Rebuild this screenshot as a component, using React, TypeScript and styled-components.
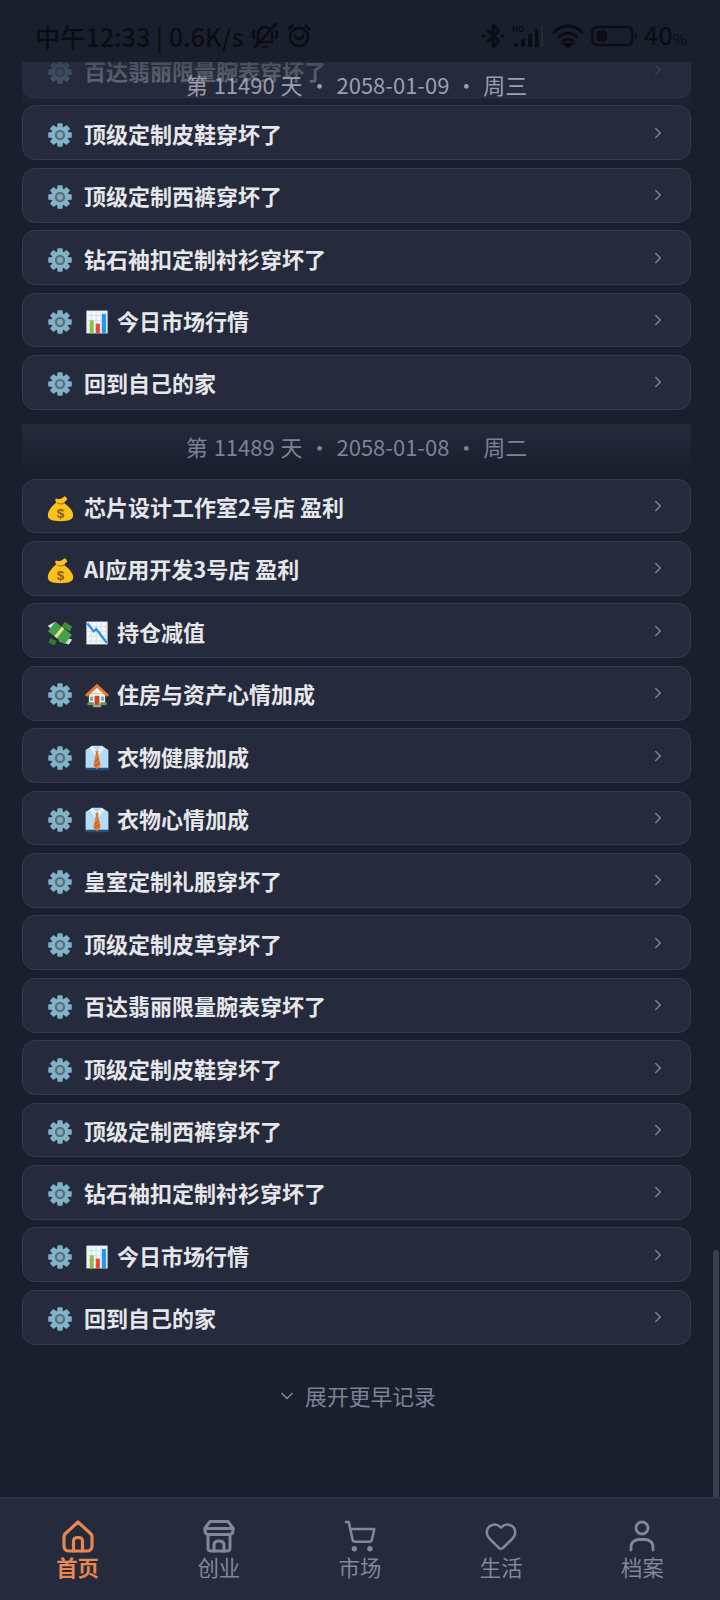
import React from "react";
import styled, { createGlobalStyle } from "styled-components";
import { ChevronRight, ChevronDown, ShoppingCart, Heart } from "lucide-react";

const Global = createGlobalStyle`
  html, body { margin: 0; padding: 0; background: #1a1f2e; }
  * { box-sizing: border-box; }
`;

const CJK = `"Noto Sans CJK SC", "Noto Sans", sans-serif`;

const Page = styled.div`
  width: 720px;
  height: 1600px;
  display: flex;
  flex-direction: column;
  background: #1a1f2e;
  font-family: ${CJK};
  overflow: hidden;
`;

const StatusBar = styled.div`
  height: 62px;
  flex: none;
  display: flex;
  align-items: center;
  justify-content: space-between;
  padding: 10px 33px 0 35px;
  color: #0b0d15;
`;

const StatusGroup = styled.div<{ $gap: number }>`
  display: flex;
  align-items: center;
  gap: ${(p) => p.$gap}px;
`;

const StatusText = styled.span`
  font-size: 25.2px;
  line-height: 30px;
  font-weight: 500;
  white-space: nowrap;
`;

const Percent = styled.span`
  font-size: 15px;
  font-weight: 700;
  color: #0e1019;
`;

const Scroller = styled.main`
  position: relative;
  flex: 1;
  min-height: 0;
  overflow: hidden;
`;

const Content = styled.div`
  margin-top: -19px;
  padding: 0 29px 0 22px;
  display: flex;
  flex-direction: column;
`;

const DayHeader = styled.div`
  height: 47px;
  margin: 14.6px 0 7.3px;
  display: flex;
  align-items: center;
  justify-content: center;
  color: #7d8296;
  font-size: 22px;
  padding-bottom: 3px;
  word-spacing: 1px;
  white-space: pre;
  background: linear-gradient(#252a3c, #1a1f2e);
`;

const StickyHeader = styled.div`
  position: absolute;
  left: 22px;
  top: 0;
  width: 669px;
  height: 46px;
  display: flex;
  align-items: center;
  justify-content: center;
  color: #9a9eae;
  font-size: 22px;
  padding-bottom: 2px;
  word-spacing: 1px;
  white-space: pre;
  background: linear-gradient(rgba(37, 42, 60, 0.82), rgba(37, 42, 60, 0.62) 70%, rgba(37, 42, 60, 0));
`;

const Rows = styled.div`
  display: flex;
  flex-direction: column;
  gap: 7.6px;
`;

const Row = styled.div`
  height: 54.8px;
  display: flex;
  align-items: center;
  padding: 0 23px 0 24px;
  background: #252a3d;
  border: 1px solid #363b4f;
  border-radius: 13px;
`;

const RowIcon = styled.span`
  width: 26px;
  height: 26px;
  flex: none;
  margin-right: 11px;
  display: block;
  position: relative;
  top: 2px;
`;

const InlineIcon = styled(RowIcon)`
  margin-right: 7px;
`;

const RowText = styled.span`
  flex: 1;
  color: #e6e7ea;
  font-size: 22px;
  font-weight: 700;
  line-height: 30px;
  white-space: nowrap;
`;

const Chevron = styled(ChevronRight)`
  width: 18px;
  height: 18px;
  flex: none;
  color: #7f8397;
`;

const More = styled.div`
  height: 48px;
  margin-top: 27px;
  display: flex;
  align-items: center;
  justify-content: center;
  gap: 8px;
  color: #7d8296;
  font-size: 21.8px;
`;

const Scrollbar = styled.div`
  position: absolute;
  right: 1px;
  top: 1188px;
  bottom: 0;
  width: 6px;
  border-radius: 3px 3px 0 0;
  background: #3b3f4e;
`;

const Nav = styled.nav`
  height: 103px;
  flex: none;
  display: grid;
  grid-template-columns: repeat(5, 1fr);
  padding: 0 7px;
  background: #252a3d;
  border-top: 2px solid #30354a;
`;

const NavItem = styled.div<{ $active?: boolean }>`
  display: flex;
  flex-direction: column;
  align-items: center;
  padding-top: 20px;
  color: ${(p) => (p.$active ? "#e8884e" : "#83879b")};
  font-size: 21.4px;
  font-weight: ${(p) => (p.$active ? 700 : 400)};
  line-height: 26px;
`;

const NavIcon = styled.span`
  width: 34px;
  height: 34px;
  display: block;
  margin-bottom: 1px;
  & > svg { display: block; width: 34px; height: 34px; }
`;

const Gear = () => (
  <svg viewBox="0 0 32 32" width="26" height="26">
    <g fill="#7fb0c6">
      {[0, 45, 90, 135, 180, 225, 270, 315].map((a) => (
        <path key={a} d="M12 8 L13 1.5 H19 L20 8 Z" transform={`rotate(${a} 16 16)`} />
      ))}
    </g>
    <circle cx="16" cy="16" r="10" fill="#85b4c9" />
    <circle cx="16" cy="16" r="6.4" fill="#4f7488" />
    <circle cx="16" cy="16" r="3.6" fill="#8fa7b5" />
  </svg>
);

const Money = () => (
  <svg viewBox="0 0 32 32" width="27" height="27">
    <path d="M11 9 C9 6 10 4 11 4 C13 5 15 5 17 4 L21 1.5 L23 3 L24 5.5 L21 8 L20.5 10 C26 13 31 19 31 24 C31 29 26 31 16 31 C6 31 1 29 1 24 C1 18 7 12 11 9 Z" fill="#fcc21b" />
    <path d="M12 9.5 C14 10.5 18 10.5 20.5 9.5" stroke="#b9801a" strokeWidth="1.6" fill="none" />
    <text x="16" y="27" textAnchor="middle" fontSize="16" fontWeight="700" fontFamily="Liberation Sans, sans-serif" fill="#8a5a16">$</text>
  </svg>
);

const MoneyWings = () => (
  <svg viewBox="0 0 32 32" width="26" height="26">
    <path d="M1 7 L10 2 L16 12 L10 17 Z" fill="#d9dce0" />
    <path d="M17 20 L31 24 L27 30 L15 26 Z" fill="#d9dce0" />
    <g transform="rotate(38 16 16)">
      <rect x="3" y="8.5" width="26" height="15" rx="1" fill="#43a047" />
      <rect x="13" y="8.5" width="4" height="15" fill="#e6df8a" />
    </g>
    <path d="M22 2 L31 8 L28 14 L18 8 Z" fill="#388e3c" />
    <path d="M4 22 L12 26 L9 31 L2 28 Z" fill="#2e7d32" />
  </svg>
);

const ChartBase = ({ children }: { children: React.ReactNode }) => (
  <svg viewBox="0 0 32 32" width="26" height="26">
    <rect x="3" y="2" width="26" height="28" fill="#f5f7f9" />
    <path d="M3 8H29M3 14H29M3 20H29M3 26H29M9 2V30M15 2V30M21 2V30M27 2V30" stroke="#c4dbe9" strokeWidth="0.9" />
    {children}
  </svg>
);

const BarChart = () => (
  <ChartBase>
    <rect x="7" y="14" width="5" height="16" fill="#8bc34a" />
    <rect x="14.5" y="18" width="5" height="12" fill="#f44336" />
    <rect x="22" y="6" width="5" height="24" fill="#2196f3" />
  </ChartBase>
);

const DownChart = () => (
  <ChartBase>
    <path d="M4 4 L12 14 L15 11 L28 28" stroke="#2f8fe0" strokeWidth="2.8" fill="none" />
  </ChartBase>
);

const HouseEmoji = () => (
  <svg viewBox="0 0 32 32" width="26" height="26">
    <rect x="6" y="14" width="20" height="14" fill="#f6efe0" />
    <rect x="11" y="27" width="10" height="4" fill="#a3a09a" />
    <path d="M16 2 L31 16 L28 18 L16 7 L4 18 L1 16 Z" fill="#e8772e" />
    <path d="M16 7 L24 14 H8 Z" fill="#f6efe0" />
    <rect x="13" y="17" width="6" height="11" rx="1" fill="#bf4a2b" />
    <rect x="7.5" y="18" width="3.5" height="5" fill="#6fa8c9" />
    <rect x="21" y="18" width="3.5" height="5" fill="#6fa8c9" />
    <rect x="4" y="25" width="8" height="3.5" rx="1.5" fill="#5c9a46" />
    <rect x="20" y="25" width="8" height="3.5" rx="1.5" fill="#5c9a46" />
  </svg>
);

const Shirt = () => (
  <svg viewBox="0 0 32 32" width="26" height="26">
    <path d="M10 1 H22 L30 6 V29 H2 V6 Z" fill="#b3dcf5" />
    <rect x="2" y="28" width="28" height="3" fill="#20517a" />
    <path d="M10 1 L16 7 L22 1 L25 4 L19 12 L16 8 L13 12 L7 4 Z" fill="#e3f1f9" />
    <path d="M14 7 H18 L17.3 11 L20.5 25 L16 30 L11.5 25 L14.7 11 Z" fill="#e8762c" />
    <path d="M13.5 21 L18.5 17 M12.8 26 L19.5 21" stroke="#a94f18" strokeWidth="1" />
  </svg>
);

type IconKey = "gear" | "money" | "wings";
type InlineKey = "bar" | "down" | "house" | "shirt";
const leading: Record<IconKey, React.ReactNode> = { gear: <Gear />, money: <Money />, wings: <MoneyWings /> };
const inline: Record<InlineKey, React.ReactNode> = { bar: <BarChart />, down: <DownChart />, house: <HouseEmoji />, shirt: <Shirt /> };

type RowData = { icon: IconKey; extra?: InlineKey; text: string };

const gear = (text: string, extra?: InlineKey): RowData => ({ icon: "gear", text, extra });

const wear: RowData[] = [
  gear("顶级定制皮鞋穿坏了"),
  gear("顶级定制西裤穿坏了"),
  gear("钻石袖扣定制衬衫穿坏了"),
  gear("今日市场行情", "bar"),
  gear("回到自己的家"),
];

const today: RowData[] = [gear("百达翡丽限量腕表穿坏了"), ...wear];

const yesterday: RowData[] = [
  { icon: "money", text: "芯片设计工作室2号店 盈利" },
  { icon: "money", text: "AI应用开发3号店 盈利" },
  { icon: "wings", extra: "down", text: "持仓减值" },
  gear("住房与资产心情加成", "house"),
  gear("衣物健康加成", "shirt"),
  gear("衣物心情加成", "shirt"),
  gear("皇室定制礼服穿坏了"),
  gear("顶级定制皮草穿坏了"),
  gear("百达翡丽限量腕表穿坏了"),
  ...wear,
];

const RowList = ({ rows }: { rows: RowData[] }) => (
  <Rows>
    {rows.map((r, i) => (
      <Row key={i}>
        <RowIcon>{leading[r.icon]}</RowIcon>
        {r.extra && <InlineIcon>{inline[r.extra]}</InlineIcon>}
        <RowText>{r.text}</RowText>
        <Chevron strokeWidth={2} />
      </Row>
    ))}
  </Rows>
);

const BellOff = () => (
  <svg viewBox="0 0 30 30" width="30" height="30" fill="none" stroke="currentColor" strokeWidth="2.6" strokeLinecap="round">
    <path d="M8 21 V13 C8 9 11 6 15 6 C17 6 19 7 20 8.5 M22 12 V21 H8 M13 26 H17 M4 10 C3 12 3 15 4 17 M26 10 C27 12 27 15 26 17" />
    <path d="M5 26 L26 3" />
  </svg>
);

const Alarm = () => (
  <svg viewBox="0 0 26 26" width="26" height="26" fill="none" stroke="currentColor" strokeWidth="2.6" strokeLinecap="round">
    <circle cx="13" cy="14" r="9" />
    <path d="M9 13 C10 17 16 17 17 13 M2.5 6 L6.5 2.5 M23.5 6 L19.5 2.5" />
  </svg>
);

const Bluetooth = () => (
  <svg viewBox="0 0 24 28" width="24" height="28" fill="none" stroke="currentColor" strokeWidth="2.6" strokeLinejoin="round">
    <path d="M6 8 L18 19 L12 25 V3 L18 9 L6 20" />
    <circle cx="2.5" cy="14" r="1.8" fill="currentColor" stroke="none" />
    <circle cx="21.5" cy="14" r="1.8" fill="currentColor" stroke="none" />
  </svg>
);

const Signal = () => (
  <svg viewBox="0 0 33 24" width="33" height="24" fill="currentColor">
    <text x="0" y="8" fontSize="8.5" fontWeight="700" fontFamily="Liberation Sans, sans-serif">HD</text>
    <rect x="2" y="19" width="4" height="4" rx="1" />
    <rect x="9" y="15" width="4" height="8" rx="1" />
    <rect x="16" y="10" width="4" height="13" rx="1" />
    <rect x="23" y="5" width="3.5" height="18" rx="1" />
    <rect x="29" y="1" width="2" height="22" rx="1" fill="#262a36" />
  </svg>
);

const Wifi = () => (
  <svg viewBox="0 0 32 24" width="32" height="24" fill="none" stroke="currentColor" strokeWidth="3" strokeLinecap="round">
    <path d="M2 8 C10 0 22 0 30 8 M7 13 C12 8 20 8 25 13 M11 17 C14 14.5 18 14.5 21 17" />
    <path d="M13 20 L16 23 L19 20 Z" fill="currentColor" />
  </svg>
);

const Battery = () => (
  <svg viewBox="0 0 46 22" width="46" height="22" fill="none">
    <rect x="1.2" y="2" width="40" height="18" rx="5" stroke="currentColor" strokeWidth="2.4" />
    <rect x="5.5" y="5.5" width="10.5" height="11" rx="2.5" fill="currentColor" />
    <rect x="44" y="8" width="2" height="6" rx="1" fill="currentColor" />
  </svg>
);

const HomeIcon = () => (
  <svg viewBox="0 0 34 34" fill="none" stroke="currentColor" strokeWidth="3.2" strokeLinejoin="round" strokeLinecap="round">
    <path d="M17 3 L30 15 C31 16 31 17 31 18 V27 C31 30 29 32 26 32 H8 C5 32 3 30 3 27 V18 C3 17 3 16 4 15 Z" />
    <path d="M12.5 32 V22 C12.5 20 14 18.5 17 18.5 C20 18.5 21.5 20 21.5 22 V32" />
  </svg>
);

const StoreIcon = () => (
  <svg viewBox="0 0 34 34" fill="none" stroke="currentColor" strokeWidth="3" strokeLinejoin="round" strokeLinecap="round">
    <path d="M8 2.5 H26 L31 9 V12 C31 14.5 29 15.5 27 15.5 H7 C5 15.5 3 14.5 3 12 V9 Z" />
    <path d="M3 9.5 H31" />
    <path d="M6 17 V29 C6 31 7 32 9 32 H25 C27 32 28 31 28 29 V17" />
    <path d="M12 32 V26 C12 23 14 22 17 22 C20 22 22 23 22 26 V32" />
  </svg>
);

const UserIcon = () => (
  <svg viewBox="0 0 34 34" fill="none" stroke="currentColor" strokeWidth="2.8" strokeLinecap="round">
    <circle cx="17" cy="9" r="6" />
    <path d="M6 31 V28 C6 23 10 20.5 14 20.5 H20 C24 20.5 28 23 28 28 V31" />
  </svg>
);

const navItems: { label: string; icon: React.ReactNode; active?: boolean }[] = [
  { label: "首页", icon: <HomeIcon />, active: true },
  { label: "创业", icon: <StoreIcon /> },
  { label: "市场", icon: <ShoppingCart strokeWidth={1.8} /> },
  { label: "生活", icon: <Heart strokeWidth={1.8} /> },
  { label: "档案", icon: <UserIcon /> },
];

export default function App() {
  return (
    <Page>
      <Global />
      <StatusBar>
        <StatusGroup $gap={6}>
          <StatusText>中午12:33 | 0.6K/s</StatusText>
          <BellOff />
          <Alarm />
        </StatusGroup>
        <StatusGroup $gap={7}>
          <Bluetooth />
          <Signal />
          <Wifi />
          <Battery />
          <StatusText>
            40<Percent>%</Percent>
          </StatusText>
        </StatusGroup>
      </StatusBar>
      <Scroller>
        <Content>
          <RowList rows={today} />
          <DayHeader>第 11489 天 · 2058-01-08 · 周二</DayHeader>
          <RowList rows={yesterday} />
          <More>
            <ChevronDown size={20} strokeWidth={2} />
            展开更早记录
          </More>
        </Content>
        <StickyHeader>第 11490 天 · 2058-01-09 · 周三</StickyHeader>
        <Scrollbar />
      </Scroller>
      <Nav>
        {navItems.map((n) => (
          <NavItem key={n.label} $active={n.active}>
            <NavIcon>{n.icon}</NavIcon>
            {n.label}
          </NavItem>
        ))}
      </Nav>
    </Page>
  );
}
